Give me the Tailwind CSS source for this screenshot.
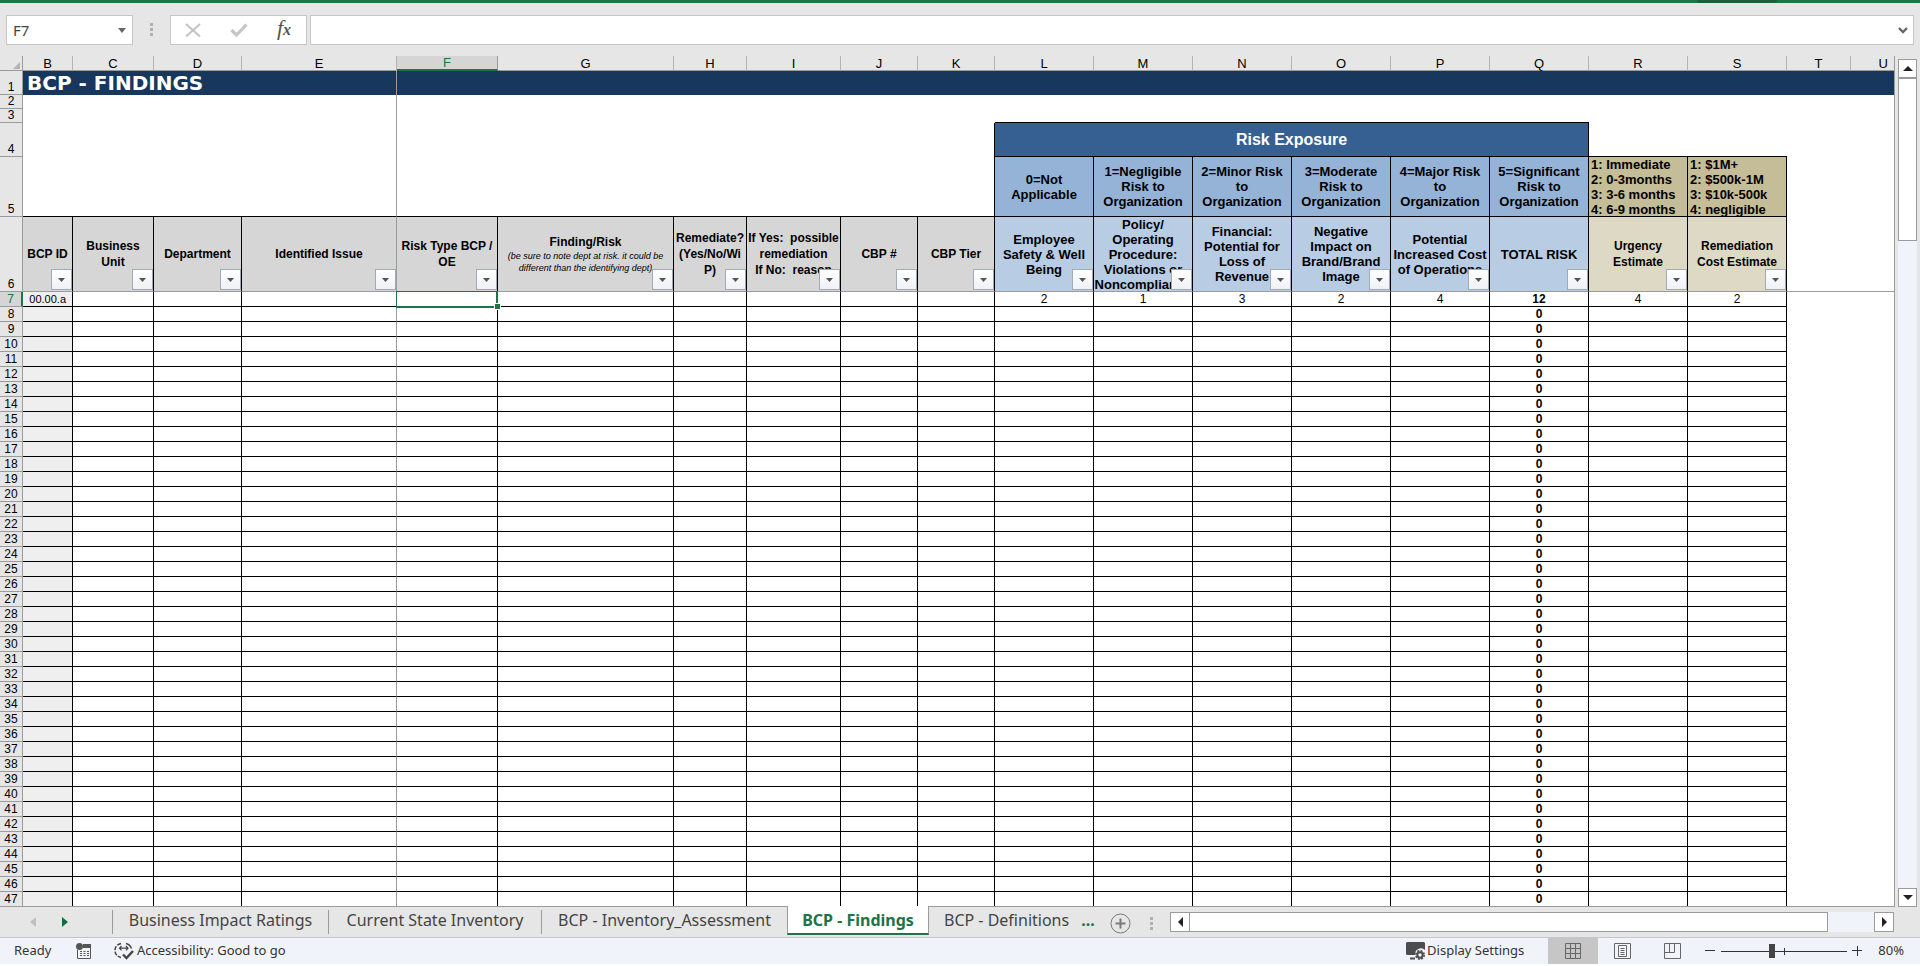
<!DOCTYPE html>
<html lang="en">
<head>
<meta charset="utf-8">
<title>BCP - Findings</title>
<script src="https://cdn.jsdelivr.net/npm/@tailwindcss/browser@4"></script>
</head>
<body class="flex h-screen flex-col overflow-hidden bg-[#e6e6e6] font-['Liberation_Sans',sans-serif] text-xs text-black">

<header class="relative h-14 shrink-0 border-t-3 border-[#217346]">
  <div class="absolute -top-[3px] right-[143px] h-[3px] w-20 rounded-b-full bg-[#1d5f3b]"></div>
  <div class="flex h-full items-center pt-[12px] pb-[11px] pl-[6px] pr-[6px] font-['Noto_Sans',sans-serif]">
    <div class="flex h-[30px] w-[127px] items-center border border-[#c6c6c6] bg-white">
      <input type="text" aria-label="Name box" value="F7" class="w-20 flex-1 bg-transparent pl-[6px] text-[15px] text-[#444] outline-none">
      <button type="button" aria-label="Open name list" class="flex w-5 items-center justify-center"><svg width="8" height="5" viewBox="0 0 8 5"><path d="M0 0h8L4 5z" fill="#666"/></svg></button>
    </div>
    <svg class="ml-[17px]" width="4" height="14" viewBox="0 0 4 14" fill="#b0b0b0"><path d="M0 0h3v3H0zM0 5h3v3H0zM0 10h3v3H0z"/></svg>
    <div class="ml-[16px] flex h-[30px] w-[137px] items-center justify-between border border-[#c6c6c6] bg-white pl-[14px] pr-[15px]">
      <button type="button" aria-label="Cancel"><svg width="16" height="14" viewBox="0 0 16 14" fill="none" stroke="#c3c3c3" stroke-width="2"><path d="M1 1l14 12.500M15 1L1 13.500"/></svg></button>
      <button type="button" aria-label="Enter"><svg width="18" height="14" viewBox="0 0 18 14" fill="none" stroke="#c6c6c6" stroke-width="3.200"><path d="M1.500 7l5 5L16.500 1.500"/></svg></button>
      <button type="button" aria-label="Insert function" class="font-['Liberation_Serif',serif] text-[22px] leading-5 text-[#555] italic">f<span class="text-base font-bold">x</span></button>
    </div>
    <div class="ml-[3px] flex h-[30px] flex-1 items-center border border-[#c6c6c6] bg-white">
      <input type="text" aria-label="Formula bar" class="h-full flex-1 bg-transparent px-2 text-sm outline-none">
      <button type="button" aria-label="Expand formula bar" class="flex w-5 items-center justify-center"><svg width="10" height="7" viewBox="0 0 10 7" fill="none" stroke="#666" stroke-width="2.400"><path d="M1 1l4 4 4-4"/></svg></button>
    </div>
  </div>
</header>

<main class="flex min-h-0 flex-1 gap-[3px] pr-[3px]">
  <div class="min-w-0 flex-1 overflow-hidden border-r border-b border-[#9b9b9b] bg-white">
    <table class="w-full table-fixed border-separate border-spacing-0">
      <colgroup>
        <col class="w-[23px]"><col class="w-[50px]"><col class="w-[81px]"><col class="w-[88px]"><col class="w-[155px]"><col class="w-[101px]"><col class="w-[176px]"><col class="w-[73px]"><col class="w-[94px]"><col class="w-[77px]"><col class="w-[77px]">
        <col class="w-[99px]"><col class="w-[99px]"><col class="w-[99px]"><col class="w-[99px]"><col class="w-[99px]"><col class="w-[99px]"><col class="w-[99px]"><col class="w-[99px]"><col class="w-[64px]"><col>
      </colgroup>
      <thead id="head"></thead>
      <tbody id="body"></tbody>
    </table>
  </div>
  <div class="flex w-[19px] flex-col pt-[3px]">
    <button type="button" aria-label="Scroll up" class="flex h-[19px] shrink-0 items-center justify-center border border-[#9b9b9b] bg-white"><svg width="10" height="5" viewBox="0 0 10 5"><path d="M0 5h10L5 0z" fill="#222"/></svg></button>
    <div class="flex-1 bg-[#f0f3f9]"><div class="h-[163px] border border-[#9b9b9b] bg-white"></div></div>
    <button type="button" aria-label="Scroll down" class="flex h-[19px] shrink-0 items-center justify-center border border-[#9b9b9b] bg-white"><svg width="10" height="5" viewBox="0 0 10 5"><path d="M0 0h10L5 5z" fill="#222"/></svg></button>
  </div>
</main>

<nav aria-label="Sheets" class="flex h-[31px] shrink-0 items-start border-b border-[#c3c6ca] pr-[26px] font-['Noto_Sans',sans-serif] text-base leading-5 text-[#444]">
  <button type="button" aria-label="Previous sheet" class="mt-[10px] ml-[30px]"><svg width="6" height="10" viewBox="0 0 6 10"><path d="M6 0v10L0 5z" fill="#c0c0c0"/></svg></button>
  <button type="button" aria-label="Next sheet" class="mt-[10px] ml-[26px]"><svg width="6" height="10" viewBox="0 0 6 10"><path d="M0 0v10l6-5z" fill="#107040"/></svg></button>
  <a href="#ratings" class="mt-[3px] ml-[44px] flex h-6 w-[216px] items-start justify-center border-l border-[#9b9b9b] whitespace-nowrap">Business Impact Ratings</a>
  <a href="#inventory" class="mt-[3px] flex h-6 w-[213px] items-start justify-center border-l border-[#9b9b9b] whitespace-nowrap">Current State Inventory</a>
  <a href="#assessment" class="mt-[3px] flex h-6 w-[246px] items-start justify-center border-l border-[#9b9b9b] whitespace-nowrap">BCP - Inventory_Assessment</a>
  <a href="#findings" aria-current="page" class="-mt-px flex h-[29px] w-[142px] items-start justify-center border-x border-b-2 border-x-[#9b9b9b] border-b-[#217346] bg-white pt-1 font-bold whitespace-nowrap text-[#217346]">BCP - Findings</a>
  <a href="#definitions" class="mt-[3px] flex h-6 w-[143px] items-start overflow-hidden pl-[15px] whitespace-nowrap">BCP - Definitions</a>
  <button type="button" aria-label="More sheets" class="mt-[3px] ml-[8px] h-5 w-4 font-bold text-[#217346]">...</button>
  <button type="button" aria-label="New sheet" class="mt-[6px] ml-[14px]"><svg width="21" height="21" viewBox="0 0 21 21" fill="none" stroke="#7a7a7a"><circle cx="10.500" cy="10.500" r="9.500"/><path d="M10.500 5.500v10M5.500 10.500h10" stroke-width="2"/></svg></button>
  <svg class="mt-[10px] ml-[19px]" width="4" height="14" viewBox="0 0 4 14" fill="#b0b0b0"><path d="M0 0h3v3H0zM0 5h3v3H0zM0 10h3v3H0z"/></svg>
  <div class="mt-[5px] ml-[16px] flex h-5 flex-1 bg-[#f0f3f9]">
    <button type="button" aria-label="Scroll left" class="flex w-5 items-center justify-center border border-[#9b9b9b] bg-white"><svg width="5" height="10" viewBox="0 0 5 10"><path d="M5 0v10L0 5z" fill="#222"/></svg></button>
    <div class="mr-[46px] -ml-px flex-1 border border-[#9b9b9b] bg-white"></div>
    <button type="button" aria-label="Scroll right" class="flex w-5 items-center justify-center border border-[#9b9b9b] bg-white"><svg width="5" height="10" viewBox="0 0 5 10"><path d="M0 0v10l5-5z" fill="#222"/></svg></button>
  </div>
</nav>

<footer class="flex h-7 shrink-0 items-center border-b-2 border-white bg-[#f0f3f9] pr-4 pl-[14px] font-['Noto_Sans',sans-serif] text-[13px] text-[#333]">
  <span class="w-[62px]">Ready</span>
  <button type="button" aria-label="Record macro"><svg width="16" height="16" viewBox="0 0 16 16" fill="none" stroke="#555"><path d="M1.500 7v8.500h13V1.500H8"/><path d="M7 1h8v4H7z" fill="#555" stroke="none"/><path d="M4 8.500h2M7.500 8.500h2M11 8.500h2M4 10.500h2M7.500 10.500h2M11 10.500h2M4 12.500h2M7.500 12.500h2M11 12.500h2"/><circle cx="3.500" cy="3.500" r="3.500" fill="#555" stroke="none"/></svg></button>
  <button type="button" class="ml-[22px] flex items-center gap-[3px] whitespace-nowrap"><svg width="20" height="18" viewBox="0 0 20 18" fill="none" stroke="#444" stroke-width="1.500"><path d="M7 1.500C3 2.500 1 5 1 8.500s2 6 6 7" stroke-dasharray="4 1.500"/><path d="M12 1.500c2.500.6 4.500 2.500 5.500 5"/><path d="M7.500 4l-2 2.200 2 2.200M5.500 6.200H10M9 6.200h5M12 4l2 2.200-2 2.200" stroke-width="1.200"/><path d="M9 12.500l3.500 3.500L19 9" stroke-width="2.400"/></svg>Accessibility: Good to go</button>
  <button type="button" class="ml-auto flex items-center gap-[2px] whitespace-nowrap"><svg width="19" height="18" viewBox="0 0 19 18"><path d="M1 0h17l1 1v7a6 6 0 0 0-10 5H1l-1-1V1z" fill="#4d4d4d"/><path d="M4 16.500h5" stroke="#4d4d4d" stroke-width="2"/><circle cx="14" cy="13" r="2.700" fill="none" stroke="#4d4d4d" stroke-width="2"/><circle cx="14" cy="13" r="4.200" fill="none" stroke="#4d4d4d" stroke-width="1.600" stroke-dasharray="2 1.300"/></svg>Display Settings</button>
  <button type="button" aria-label="Normal view" class="ml-6 flex h-[26px] w-[50px] items-center justify-center bg-[#c6c6c6]"><svg width="16" height="16" viewBox="0 0 16 16" fill="none" stroke="#666"><path d="M.5.5h15v15H.5zM.5 5.500h15M.5 10.500h15M5.500.5v15M10.500.5v15"/></svg></button>
  <button type="button" aria-label="Page layout view" class="ml-4"><svg width="17" height="16" viewBox="0 0 17 16" fill="none" stroke="#666"><path d="M.5.5h16v15H.5zM4.500 2.500h8v11h-8zM6.500 5.500h4M6.500 7.500h4M6.500 9.500h4M6.500 11.500h4"/></svg></button>
  <button type="button" aria-label="Page break preview" class="ml-[33px]"><svg width="17" height="16" viewBox="0 0 17 16" fill="none" stroke="#666"><path d="M.5.5h16v15H.5zM.5 9.500h10v-9M5.500.5v9"/></svg></button>
  <button type="button" aria-label="Zoom out" class="ml-6"><svg width="10" height="10" viewBox="0 0 10 10"><path d="M0 4.500h10" stroke="#333"/></svg></button>
  <svg class="ml-[6px]" width="126" height="16" viewBox="0 0 126 16" role="img" aria-label="Zoom level"><path d="M0 8.500h126M63.500 5v7" stroke="#333"/><path d="M48 1h6v14h-6z" fill="#444"/></svg>
  <button type="button" aria-label="Zoom in" class="ml-[5px]"><svg width="10" height="10" viewBox="0 0 10 10"><path d="M0 4.500h10M5.500 0v10" stroke="#333"/></svg></button>
  <button type="button" class="ml-4">80%</button>
</footer>

<script>
const letters = 'BCDEFGHIJKLMNOPQRSTU'.split('');
const head = document.getElementById('head');
const body = document.getElementById('body');
const RN = 'border-r border-b border-[#9b9b9b] bg-[#e6e6e6] p-0 text-center align-bottom font-normal text-xs leading-[13px]';
const freeze = 'border-r border-r-[#9b9b9b]';

// Column letters
head.insertAdjacentHTML('beforeend', '<tr class="h-[15px]"><th class="h-[15px] border-r border-b border-[#9b9b9b] bg-[#e6e6e6] p-0"><svg class="mt-1 ml-[13px]" width="7" height="7" viewBox="0 0 7 7"><path d="M7 0v7H0z" fill="#b4b4b4"/></svg></th>' +
  letters.map(l => l === 'F'
    ? '<th scope="col" class="h-[15px] border-r border-b-2 border-r-[#9b9b9b] border-b-[#217346] bg-[#d5d5d5] p-0 text-[13px] leading-3 font-normal text-[#217346]">F</th>'
    : l === 'U'
    ? '<th scope="col" class="h-[15px] border-b border-[#9b9b9b] bg-[#e6e6e6] p-0 pr-[6px] text-right text-[13px] leading-[13px] font-normal">U</th>'
    : `<th scope="col" class="h-[15px] border-r border-b border-r-[#b4b4b4] border-b-[#9b9b9b] bg-[#e6e6e6] p-0 text-[13px] leading-[13px] font-normal">${l}</th>`).join('') + '</tr>');

// Rows 1-5
const num = (n, h) => `<th scope="row" class="${h} ${RN}">${n}</th>`;
const blank = '<td class="p-0"></td>';
const left = `${blank.repeat(3)}<td class="p-0 ${freeze}"></td>`;
let html = `<tr>${num(1, 'h-[24px]')}<td colspan="4" class="bg-[#17375d] p-0 pl-1 align-middle font-['Verdana','DejaVu_Sans',sans-serif] text-[20px] leading-[22px] font-bold text-white ${freeze}">BCP - FINDINGS</td><td colspan="16" class="bg-[#17375d] p-0"></td></tr>`;
html += `<tr>${num(2, 'h-[14px]')}${left}${blank.repeat(16)}</tr>`;
html += `<tr>${num(3, 'h-[14px]')}${left}${blank.repeat(5)}<td class="border-r border-transparent p-0"></td><td colspan="6" class="border-b border-black p-0"></td>${blank.repeat(4)}</tr>`;
html += `<tr>${num(4, 'h-[34px]')}${left}${blank.repeat(5)}<td class="border-r border-black p-0"></td><td colspan="6" class="border-r border-b border-black bg-[#366092] p-0 text-center align-middle text-base leading-5 font-bold text-white">Risk Exposure</td><td class="border-b border-black p-0"></td><td class="border-b border-black p-0"></td>${blank.repeat(2)}</tr>`;
const scale = ['0=Not<br>Applicable', '1=Negligible<br>Risk to<br>Organization', '2=Minor Risk<br>to<br>Organization', '3=Moderate<br>Risk to<br>Organization', '4=Major Risk<br>to<br>Organization', '5=Significant<br>Risk to<br>Organization'];
const est = ['1: Immediate<br>2: 0-3months<br>3: 3-6 months<br>4: 6-9 months', '1: $1M+<br>2: $500k-1M<br>3: $10k-500k<br>4: negligible'];
const under = '<td class="border-b border-black p-0"></td>';
html += `<tr>${num(5, 'h-[60px]')}${under.repeat(3)}<td class="border-b border-black p-0 ${freeze}"></td>${under.repeat(5)}<td class="border-r border-b border-black p-0"></td>` +
  scale.map(t => `<td class="border-r border-b border-black bg-[#95b3d7] p-0 text-center align-middle text-[13px] leading-[15px] font-bold whitespace-nowrap">${t}</td>`).join('') +
  est.map(t => `<td class="border-r border-b border-black bg-[#c4bd97] p-0 pl-[2px] align-middle text-[13px] font-bold whitespace-nowrap"><div class="h-[59px] overflow-hidden leading-[15px]">${t}</div></td>`).join('') + blank.repeat(2) + '</tr>';

// Row 6: titles with filter buttons
const note = 'Finding/Risk<div class="text-[9px] leading-3 font-normal italic">(be sure to note dept at risk. it could be<br>different than the identifying dept)</div>';
const titles = ['BCP ID', 'Business<br>Unit', 'Department', 'Identified Issue', 'Risk Type BCP /<br>OE', note, 'Remediate?<br>(Yes/No/Wi<br>P)', 'If Yes:&nbsp; possible<br>remediation<br>If No:&nbsp; reason', 'CBP #', 'CBP Tier',
  'Employee<br>Safety &amp; Well<br>Being', 'Policy/<br>Operating<br>Procedure:<br>Violations or<br>Noncompliance', 'Financial:<br>Potential for<br>Loss of<br>Revenue', 'Negative<br>Impact on<br>Brand/Brand<br>Image', 'Potential<br>Increased Cost<br>of Operations', 'TOTAL RISK', 'Urgency<br>Estimate', 'Remediation<br>Cost Estimate'];
const skin = i => i < 10 ? 'bg-[#d6d6d6] text-xs leading-4' : i < 16 ? 'bg-[#b8cce4] text-[13px] leading-[15px]' : 'bg-[#ddd9c4] text-xs leading-4';
html += `<tr>${num(6, 'h-[75px]')}` + titles.map((t, i) =>
  `<td class="border-r border-b border-b-[#9b9b9b] ${i === 3 ? 'border-r-[#9b9b9b]' : 'border-r-black'} p-0 text-center font-bold whitespace-nowrap ${skin(i)}"><div class="relative flex h-[74px] items-center justify-center overflow-hidden"><div>${t}</div><button type="button" aria-label="Filter column ${letters[i]}" class="absolute right-0 bottom-px flex h-[21px] w-[21px] items-center justify-center border border-[#a3a9b5] bg-linear-to-b from-white to-[#eef1f7]"><svg width="7" height="4" viewBox="0 0 7 4"><path d="M0 0h7L3.500 4z" fill="#555"/></svg></button></div></td>`).join('') +
  '<td class="border-b border-[#9b9b9b] p-0"></td><td class="border-b border-[#9b9b9b] p-0"></td></tr>';
head.insertAdjacentHTML('beforeend', html);

// Rows 7-47
const first = {B: '00.00.a', L: 2, M: 1, N: 3, O: 2, P: 4, Q: 12, R: 4, S: 2};
let rows = '';
for (let r = 7; r <= 47; r++) {
  rows += r === 7
    ? '<tr><th scope="row" class="h-[15px] border-r-2 border-b border-r-[#217346] border-b-[#9b9b9b] bg-[#d5d5d5] p-0 text-center align-bottom text-xs leading-[13px] font-normal text-[#217346]">7</th>'
    : `<tr>${num(r, 'h-[15px]')}`;
  rows += letters.slice(0, 18).map(l => {
    const v = r === 7 ? (first[l] ?? '') : l === 'Q' ? 0 : '';
    if (r === 7 && l === 'F') return '<td class="relative h-[15px] border-r border-b border-black p-0"><div class="absolute -top-px -right-px -bottom-[2px] -left-px border-2 border-t border-l border-[#217346]"></div><div class="absolute -right-[3px] -bottom-[3px] h-[5px] w-[5px] bg-[#217346] outline outline-white"></div></td>';
    return `<td class="h-[15px] border-r border-b border-b-black ${l === 'E' ? 'border-r-[#9b9b9b]' : 'border-r-black'} ${l === 'B' ? 'bg-[#efefef] pr-[6px] text-right text-[11px]' : 'text-center text-xs'} ${l === 'Q' ? 'font-bold' : ''} py-0 pl-0 leading-[14px]">${v}</td>`;
  }).join('') + blank.repeat(2) + '</tr>';
}
body.innerHTML = rows;
</script>
</body>
</html>
